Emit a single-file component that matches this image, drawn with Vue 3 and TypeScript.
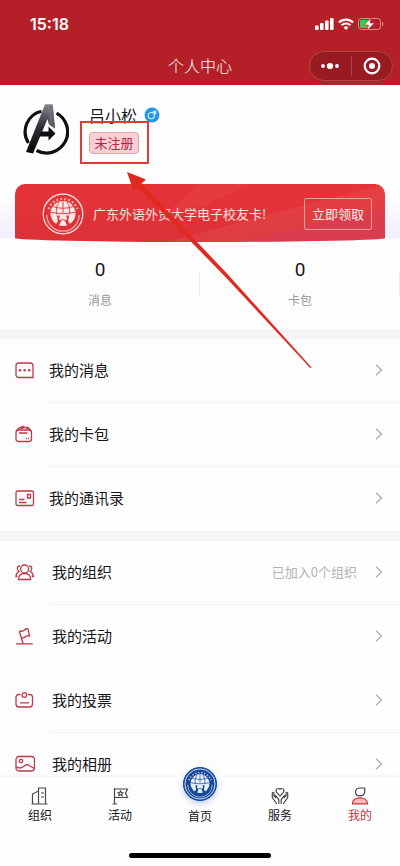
<script setup lang="ts">
interface Row {
  id: string
  label: string
  note?: string
  line: boolean
}
interface Tab {
  id: string
  label: string
  active?: boolean
}

const stats = [
  { label: '消息', value: 0 },
  { label: '卡包', value: 0 },
]

const groups: { id: string; rows: Row[] }[] = [
  {
    id: 'personal',
    rows: [
      { id: 'message', label: '我的消息', line: true },
      { id: 'wallet', label: '我的卡包', line: true },
      { id: 'contacts', label: '我的通讯录', line: false },
    ],
  },
  {
    id: 'community',
    rows: [
      { id: 'group', label: '我的组织', note: '已加入0个组织', line: true },
      { id: 'event', label: '我的活动', line: false },
      { id: 'vote', label: '我的投票', line: true },
      { id: 'album', label: '我的相册', line: false },
    ],
  },
]

const tabs: Tab[] = [
  { id: 'org', label: '组织' },
  { id: 'activity', label: '活动' },
  { id: 'home', label: '首页' },
  { id: 'service', label: '服务' },
  { id: 'mine', label: '我的', active: true },
]
</script>

<template>
  <div class="app">
    <svg class="defs" width="0" height="0" aria-hidden="true">
      <defs>
        <symbol id="seal" viewBox="0 0 42 42">
          <g fill="none" stroke="currentColor">
            <circle cx="21" cy="21" r="19.8" stroke-width="1.2" />
            <path d="M6.500 16A15.500 15.500 0 0 1 35.500 16" stroke-width="2.200" stroke-dasharray="1.800 2.200" opacity=".7" />
            <path d="M4.800 22A16.200 16.200 0 0 0 37.200 22" stroke-width="1.300" opacity=".65" />
          </g>
          <circle cx="21" cy="20.500" r="12.500" fill="currentColor" />
          <g class="seal-grid">
            <path class="seal-cut" d="M15 22.500H17.800L17 26L19 28.500L16.500 33H13L15.800 28ZM27 22.500H24.200L25 26L23 28.500L25.500 33H29L26.200 28Z" />
            <path
              d="M21 8V20M10.800 13.500Q21 17 31.200 13.500M8.600 19.500Q21 22 33.400 19.500M17 9Q13.500 14 14.500 21.500M25 9Q28.500 14 27.500 21.500M17 28L21 26.500L25 28"
              fill="none"
              stroke-width=".9"
            />
          </g>
        </symbol>
      </defs>
    </svg>

    <header class="top">
      <div class="status">
        <time class="clock">15:18</time>
        <div class="signals">
          <svg width="19" height="12" viewBox="0 0 19 12" fill="#fff" aria-hidden="true">
            <rect x="0" y="7.500" width="3.600" height="4.500" rx="1" />
            <rect x="5" y="5" width="3.600" height="7" rx="1" />
            <rect x="10" y="2.500" width="3.600" height="9.500" rx="1" />
            <rect x="15" y="0" width="3.600" height="12" rx="1" />
          </svg>
          <svg width="16" height="12" viewBox="0 0 16 12" aria-hidden="true">
            <g fill="none" stroke="#fff" stroke-width="2.100">
              <path d="M.9 4.500a10.200 10.200 0 0 1 14.200 0" />
              <path d="M3.600 7.300a6.300 6.300 0 0 1 8.800 0" />
            </g>
            <path d="M8 12L5.600 9.500a3.400 3.400 0 0 1 4.800 0z" fill="#fff" />
          </svg>
          <svg width="26" height="14" viewBox="0 0 26 14" aria-hidden="true">
            <rect x=".5" y="1.500" width="22" height="11" rx="3" fill="none" stroke="#e08a8e" />
            <rect x="2" y="3" width="9" height="8" rx="1.500" fill="#3ccb52" />
            <path d="M24 5v4q1.500-.6 1.500-2T24 5z" fill="#e08a8e" />
            <path d="M13 .8L6 8h4.500L9 13.500L16.500 6H12z" fill="#fff" stroke="#b51f28" stroke-width=".6" />
          </svg>
        </div>
      </div>
      <div class="nav">
        <h1 class="title">个人中心</h1>
        <div class="capsule">
          <button type="button" class="capsule-btn" aria-label="更多">
            <svg width="20" height="8" viewBox="0 0 20 8" fill="#fff" aria-hidden="true">
              <circle cx="3" cy="4" r="1.900" /><circle cx="10" cy="4" r="3.100" /><circle cx="17" cy="4" r="1.900" />
            </svg>
          </button>
          <button type="button" class="capsule-btn" aria-label="关闭">
            <svg width="18" height="18" viewBox="0 0 18 18" aria-hidden="true">
              <circle cx="9" cy="9" r="7.300" fill="none" stroke="#fff" stroke-width="2.200" />
              <circle cx="9" cy="9" r="3" fill="#fff" />
            </svg>
          </button>
        </div>
      </div>
    </header>

    <main class="content">
      <section class="hero">
        <div class="profile">
          <svg class="avatar" width="48" height="54" viewBox="0 0 48 54" aria-hidden="true">
            <defs>
              <linearGradient id="steel" x1="0" y1="0" x2="0" y2="1">
                <stop offset="0" stop-color="#85858c" />
                <stop offset=".45" stop-color="#303036" />
                <stop offset="1" stop-color="#08080b" />
              </linearGradient>
            </defs>
            <g fill="none" stroke="#111115" stroke-width="3.200">
              <path d="M20.500 9.200A21 21 0 0 0 7.500 41" />
              <path d="M35.500 11.200A21 21 0 0 1 15.500 48.500" />
            </g>
            <path d="M24 2.300H31.800L34 26.500L28 22.500L26.500 17L12 51.500L5 50Z" fill="url(#steel)" />
            <path d="M27 6L31.500 3L34 26.500L28 22.500Z" fill="#77777f" opacity=".6" />
            <path d="M20 29.500H27.500V24.500L34.500 31.500L27.500 38.500V34.500H18Z" fill="#101014" />
          </svg>
          <div class="who">
            <div class="name-line">
              <span class="name">吕小松</span>
              <svg width="16" height="16" viewBox="0 0 16 16" role="img" aria-label="男">
                <circle cx="8" cy="8" r="7.500" fill="#2496e8" />
                <g fill="none" stroke="#e4f4ff" stroke-width="1.100">
                  <circle cx="7.300" cy="8.600" r="3.100" />
                  <path d="M9.500 6.400L11.600 4.300M8.800 4.300H11.700V7.200" />
                </g>
              </svg>
            </div>
            <span class="badge">未注册</span>
            <span class="highlight"></span>
          </div>
        </div>

        <div class="banner">
          <svg class="banner-art" viewBox="0 0 370 58" preserveAspectRatio="none" aria-hidden="true">
            <path d="M188 22L235 0H185L150 30Z" fill="#fff" opacity=".04" />
            <path d="M150 58L370 0V58Z" fill="#fff" opacity=".06" />
            <path d="M225 58L370 24V58Z" fill="#c33c78" opacity=".2" />
          </svg>
          <svg class="seal seal-red" width="42" height="42" aria-hidden="true"><use href="#seal" /></svg>
          <p class="banner-text">广东外语外贸大学电子校友卡!</p>
          <button type="button" class="claim">立即领取</button>
        </div>
      </section>

      <section class="stats">
        <a v-for="s in stats" :key="s.label" href="#" class="stat">
          <strong class="stat-value">{{ s.value }}</strong>
          <span class="stat-label">{{ s.label }}</span>
        </a>
      </section>

      <nav v-for="g in groups" :key="g.id" class="group" :class="g.id">
        <a v-for="r in g.rows" :key="r.id" href="#" class="row">
          <svg class="row-icon" width="20" height="20" viewBox="0 0 20 20" aria-hidden="true">
            <template v-if="r.id === 'message'">
              <path d="M4 3H15Q18 3 18 6V17.500H4Q1 17.500 1 14.500V6Q1 3 4 3Z" />
              <g class="solid"><circle cx="5" cy="10.300" r="1.200" /><circle cx="9.600" cy="10.300" r="1.200" /><circle cx="14.200" cy="10.300" r="1.200" /></g>
            </template>
            <template v-else-if="r.id === 'wallet'">
              <rect x="1" y="6" width="15.500" height="11.500" rx="2.500" />
              <path d="M2 6Q4 3.500 8 2.500L14.500 5.500M5 5.500Q9 3 13 3.500L15.500 6M4 9H12.500" />
              <path d="M11 14.500H14" stroke-dasharray="1 1" />
            </template>
            <template v-else-if="r.id === 'contacts'">
              <rect x="1" y="3" width="17.500" height="14.500" rx="1.500" />
              <path d="M12.500 6.500H15.500V10H12.500ZM4 11.500H9.500M4 14.500H11.500" />
            </template>
            <template v-else-if="r.id === 'group'">
              <circle cx="9.600" cy="7" r="4" />
              <path d="M3.500 17.500Q3.500 11.500 9.600 11.500T15.700 17.500ZM5 4Q2 4 2.500 7Q2.700 8.500 4 9.500Q1 11 1 14.500H2.500M14 4Q17 4 16.700 7Q16.500 8.500 15.200 9.500Q18.300 11 18.300 14.500H16.700" />
            </template>
            <template v-else-if="r.id === 'event'">
              <path d="M1 17.800H17.800M8 17.500L4.300 5M4.300 5Q8 5.800 9.500 4T13 3L14.500 10Q11.500 9.500 10 11T6.200 11.500" />
            </template>
            <template v-else-if="r.id === 'vote'">
              <path d="M5.500 4.500H4Q1 4.500 1 7.500V14Q1 17 4 17H14.500Q17.500 17 17.500 14V7.500Q17.500 4.500 14.500 4.500H13M5 12.800H14" />
              <circle cx="9.300" cy="5" r="2.300" />
            </template>
            <template v-else>
              <rect x="1" y="2.500" width="18.500" height="14.500" rx="3" />
              <circle cx="6" cy="7" r="1.700" />
              <path d="M1 12.500Q4.500 15.500 8.500 12.500T14 11.500L19.500 14.500" />
            </template>
          </svg>
          <span class="row-main" :class="{ lined: r.line }">
            <span class="row-label">{{ r.label }}</span>
            <span v-if="r.note" class="row-note">{{ r.note }}</span>
            <svg class="chevron" width="8" height="12" viewBox="0 0 8 12" aria-hidden="true">
              <path d="M1 .8L6.500 6L1 11.200" />
            </svg>
          </span>
        </a>
      </nav>
    </main>

    <footer class="bottom">
      <nav class="tabs">
        <a v-for="t in tabs" :key="t.id" href="#" class="tab" :class="{ active: t.active, home: t.id === 'home' }">
          <span v-if="t.id === 'home'" class="home-badge">
            <svg class="seal seal-blue" width="32" height="32" aria-hidden="true"><use href="#seal" /></svg>
          </span>
          <svg v-else class="tab-icon" width="20" height="20" viewBox="0 0 20 20" aria-hidden="true">
            <template v-if="t.id === 'org'">
              <path d="M2.500 18V8L8.500 5V18M8.500 18V2H15.500V18M1.500 18H17.500M11 7H14M11 11H14" />
            </template>
            <template v-else-if="t.id === 'activity'">
              <path d="M4.500 18V2M2.500 18H7M4.500 3H17.500L15.500 7.200L17.500 11.500H4.500" />
              <path d="M10.500 4.900L11.300 6.500L13 6.700L11.800 7.900L12.100 9.600L10.500 8.800L8.900 9.600L9.200 7.900L8 6.700L9.700 6.500Z" />
            </template>
            <template v-else-if="t.id === 'service'">
              <path d="M10 9.800L6.800 6.600C5.300 5 6.200 2.500 8.200 2.500Q9.300 2.500 10 3.500Q10.700 2.500 11.800 2.500C13.800 2.500 14.700 5 13.200 6.600Z" />
              <path d="M2.300 6.500V11.500L6.800 18M2.300 6.500Q3.600 6 4 7.500V10L6.300 12M4 10Q5.300 9 6.300 10.500L8.800 13.500V18M17.700 6.500V11.500L13.200 18M17.700 6.500Q16.400 6 16 7.500V10L13.700 12M16 10Q14.700 9 13.700 10.500L11.200 13.500V18" />
            </template>
            <template v-else>
              <path class="mine-body" d="M2.500 17.800C2.500 14 5.500 11.800 10 11.800S17.500 14 17.500 17.800Z" />
              <path d="M14.700 2H10.500C7.500 2 5.500 3.700 5.500 6C5.500 8.300 7.400 9.900 10.100 9.900S14.700 8.200 14.700 6Z" />
            </template>
          </svg>
          <span class="tab-label">{{ t.label }}</span>
        </a>
      </nav>
      <div class="indicator"></div>
    </footer>

    <svg class="arrow" width="186" height="198" viewBox="0 0 186 198" aria-hidden="true">
      <path d="M1 1L20 8.500L15.500 12.500L100 101.500L185.500 196.300L184.500 197.200L97.500 104L11.500 16L7.500 20Z" fill="#e0291f" />
    </svg>
  </div>
</template>

<style>
body {
  margin: 0;
  background: #fff;
}
</style>

<style scoped>
.app {
  position: relative;
  display: flex;
  flex-direction: column;
  height: 100vh;
  overflow: hidden;
  background: #fefdfe;
  color: #17171b;
  font-family: "Noto Sans CJK SC", "Noto Sans", sans-serif;
}
.app *,
.app *::before,
.app *::after {
  box-sizing: border-box;
}
a {
  color: inherit;
  text-decoration: none;
}
button {
  padding: 0;
  border: 0;
  background: none;
  color: inherit;
  font: inherit;
  cursor: pointer;
}
.defs {
  position: absolute;
}

.top {
  flex: none;
  background: #b51f28;
  color: #fff;
}
.status {
  display: flex;
  align-items: center;
  justify-content: space-between;
  height: 48px;
  padding: 0 16px 0 30px;
}
.clock {
  font-family: Inter, "Liberation Sans", sans-serif;
  font-size: 16px;
  font-weight: 600;
}
.signals {
  display: flex;
  align-items: center;
  gap: 4px;
}
.nav {
  display: grid;
  grid-template-columns: 1fr auto 1fr;
  align-items: center;
  height: 37px;
  padding: 0 7px 2px;
}
.title {
  grid-column: 2;
  margin: 0;
  padding-bottom: 2px;
  font-size: 16px;
  font-weight: 300;
  line-height: 24px;
}
.capsule {
  display: flex;
  justify-self: end;
  align-items: center;
  width: 84px;
  height: 30px;
  border: 1px solid #b0464c;
  border-radius: 15px;
  background: #991b22;
}
.capsule-btn {
  display: flex;
  flex: 1;
  align-items: center;
  justify-content: center;
  height: 20px;
}
.capsule-btn + .capsule-btn {
  border-left: 1px solid #b0464c;
}

.content {
  flex: 1;
  min-height: 0;
  overflow-y: auto;
  scrollbar-width: none;
}
.hero {
  padding: 17px 15px 0;
  background: linear-gradient(#fefdfe 110px, #efeffc 153px, #fefdfe 153px);
}
.profile {
  display: flex;
  gap: 20px;
  height: 82px;
  padding-left: 6px;
}
.who {
  position: relative;
}
.name-line {
  display: flex;
  align-items: center;
  gap: 7px;
  height: 26px;
  font-size: 16px;
  line-height: 24px;
}
.badge {
  display: block;
  width: 50px;
  margin-top: 4px;
  border: 1px solid #dfa3a8;
  border-radius: 4px;
  background: #f8d0d3;
  color: #b5263f;
  font-size: 13px;
  line-height: 20px;
  text-align: center;
}
.highlight {
  position: absolute;
  top: 19px;
  left: -9px;
  width: 69px;
  height: 43px;
  border: 2px solid #e03a35;
}
.banner {
  position: relative;
  display: flex;
  align-items: center;
  height: 58px;
  padding: 2px 13px 0 27px;
  overflow: hidden;
  border-radius: 10px 10px 50% 50% / 10px 10px 4px 4px;
  background: linear-gradient(#e53437, #dc3138);
  color: #fff;
}
.banner-art {
  position: absolute;
  inset: 0;
  width: 100%;
  height: 100%;
}
.seal {
  position: relative;
  flex: none;
}
.seal-red {
  --grid: #e03338;
  color: #ffe9e6;
}
.seal-blue {
  --grid: #16479b;
  color: #e8f2ff;
}
.seal-grid {
  stroke: var(--grid);
}
.seal-cut {
  fill: var(--grid);
  stroke: none;
}
.banner-text {
  position: relative;
  flex: 1;
  margin: 0 0 0 9px;
  font-size: 13px;
  line-height: 20px;
  color: #ffe3e0;
  white-space: nowrap;
}
.claim {
  position: relative;
  width: 68px;
  height: 32px;
  border: 1px solid #f29a98;
  border-radius: 2px;
  color: #ffeceb;
  font-size: 13px;
  line-height: 28px;
}

.stats {
  display: flex;
  height: 87px;
  padding-top: 16px;
}
.stat {
  position: relative;
  display: flex;
  flex: 1;
  flex-direction: column;
  align-items: center;
  gap: 8px;
}
.stat::after {
  position: absolute;
  top: 14px;
  right: 0;
  width: 1px;
  height: 24px;
  background: #e9e8ea;
  content: "";
}
.stat-value {
  font-family: Roboto, "Liberation Sans", sans-serif;
  font-size: 19px;
  font-weight: 400;
  line-height: 24px;
}
.stat-label {
  color: #99979c;
  font-size: 12px;
  line-height: 20px;
}

.group {
  border-top: 10px solid #f5f4f6;
}
.row {
  display: flex;
  height: 64px;
  padding-left: 15px;
}
.row-icon {
  flex: none;
  align-self: center;
  margin-bottom: 2px;
  fill: none;
  stroke: #bb3944;
  stroke-width: 1.3;
}
.solid {
  fill: #bb3944;
  stroke: none;
}
.row-main {
  display: flex;
  flex: 1;
  align-items: center;
  margin-left: 14px;
  padding: 0 17px 2px 0;
}
.community .row-main {
  margin-left: 17px;
}
.lined {
  border-bottom: 1px solid #f3f2f4;
}
.row-label {
  flex: 1;
  font-size: 15px;
  line-height: 24px;
}
.row-note {
  margin-right: 18px;
  color: #b4b2b5;
  font-size: 13px;
  line-height: 24px;
}
.chevron {
  fill: none;
  stroke: #b0aeb2;
  stroke-width: 1.4;
}

.bottom {
  position: relative;
  flex: none;
  background: #fefdfe;
  box-shadow: 0 -1px 3px #f3f1f4;
}
.tabs {
  display: flex;
  height: 76px;
  padding-top: 9px;
}
.tab {
  position: relative;
  display: flex;
  flex: 1;
  flex-direction: column;
  align-items: center;
}
.tab-icon {
  fill: none;
  stroke: #47474c;
  stroke-width: 1.2;
}
.tab-label {
  font-size: 12px;
  line-height: 18px;
}
.tab.active .tab-label {
  color: #c5323a;
}
.mine-body {
  fill: #f6b9b3;
  stroke: #c23a3c;
}
.home {
  padding-top: 21px;
}
.home-badge {
  position: absolute;
  top: -25px;
  display: flex;
  align-items: center;
  justify-content: center;
  width: 52px;
  height: 46px;
  border-radius: 26px 26px 0 0;
  background: #fefdfe;
}
.seal-blue {
  box-sizing: content-box;
  border: 1px solid #16479b;
  border-radius: 50%;
  background: #16479b;
  box-shadow: 0 2px 6px #b5cdf0;
}
.indicator {
  width: 142px;
  height: 5px;
  margin: 0 auto 8px;
  border-radius: 3px;
  background: #000;
}
.arrow {
  position: absolute;
  top: 171px;
  left: 126px;
  pointer-events: none;
}
</style>
